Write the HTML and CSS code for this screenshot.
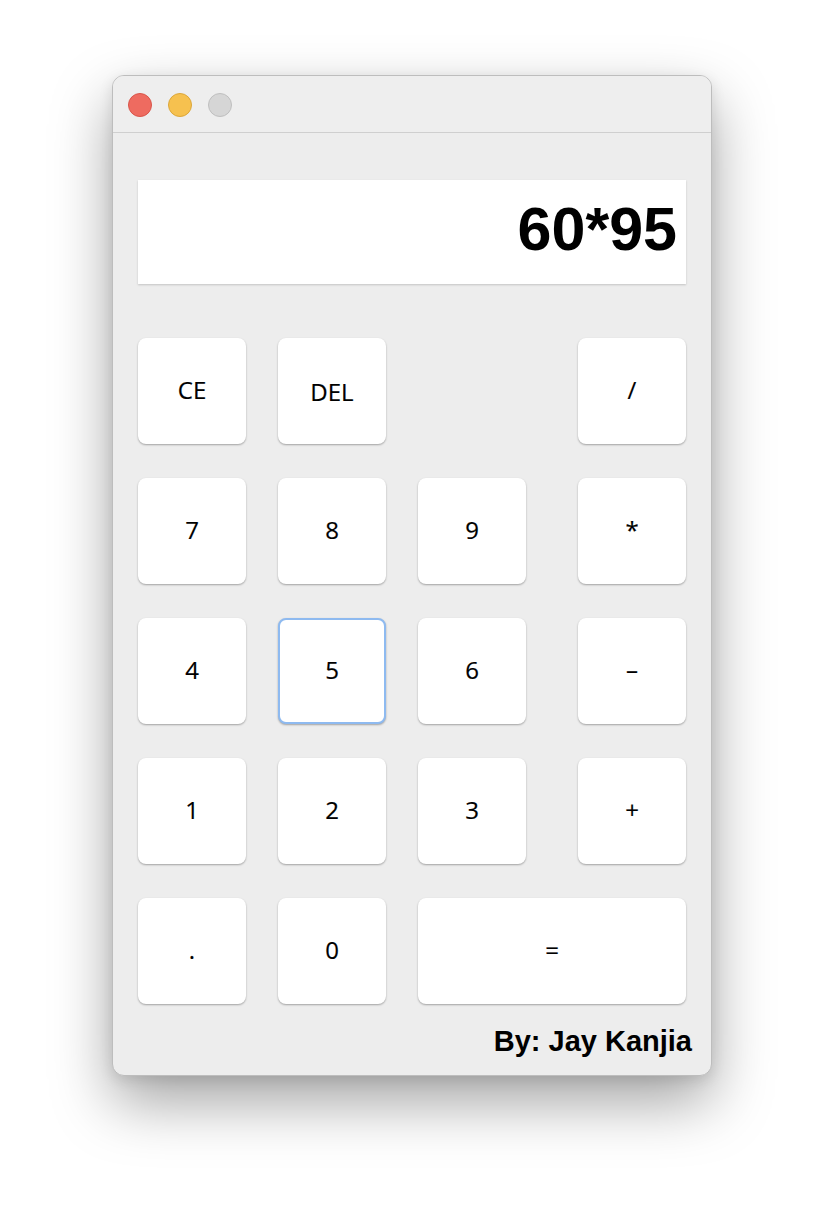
FILE: index.html
```html
<!DOCTYPE html>
<html>
<head>
<meta charset="utf-8">
<link rel="stylesheet" href="styles.css">
<title>Calculator</title>
</head>
<body>
<div class="window">
  <div class="titlebar">
    <span class="light red"></span>
    <span class="light yellow"></span>
    <span class="light gray"></span>
  </div>
  <div class="content">
    <div class="display">60*95</div>
    <div class="keys">
      <button class="key">CE</button>
      <button class="key key-del">DEL</button>
      <span class="spacer"></span>
      <button class="key op">/</button>

      <button class="key">7</button>
      <button class="key">8</button>
      <button class="key">9</button>
      <button class="key op">*</button>

      <button class="key">4</button>
      <button class="key focused">5</button>
      <button class="key">6</button>
      <button class="key op">–</button>

      <button class="key">1</button>
      <button class="key">2</button>
      <button class="key">3</button>
      <button class="key op">+</button>

      <button class="key">.</button>
      <button class="key">0</button>
      <button class="key equals">=</button>
    </div>
    <div class="credit">By: Jay Kanjia</div>
  </div>
</div>
</body>
</html>
```

FILE: styles.css
```css
html, body {
  margin: 0;
  padding: 0;
  background: #ffffff;
}

body {
  min-height: 1224px;
  box-sizing: border-box;
  padding-top: 75px;
  padding-left: 112px;
  font-family: "Liberation Sans", Arial, sans-serif;
}

.window {
  width: 600px;
  height: 1001px;
  box-sizing: border-box;
  border: 1px solid #bdbdbd;
  border-radius: 12px;
  background: #ededed;
  box-shadow: 0 26px 60px rgba(0, 0, 0, 0.36), 0 4px 14px rgba(0, 0, 0, 0.10);
  overflow: hidden;
  display: flex;
  flex-direction: column;
}

.titlebar {
  height: 57px;
  flex: none;
  box-sizing: border-box;
  border-bottom: 1px solid #cfcfcf;
  background: #eeeeee;
  display: flex;
  align-items: center;
  gap: 16px;
  padding-left: 15px;
  padding-top: 1px;
}

.light {
  width: 24px;
  height: 24px;
  box-sizing: border-box;
  border-radius: 50%;
  display: block;
}

.red {
  background: #ee6b60;
  border: 1px solid #d9554a;
}

.yellow {
  background: #f6c14f;
  border: 1px solid #dca73a;
}

.gray {
  background: #d6d6d6;
  border: 1px solid #bfbfbf;
}

.content {
  flex: 1;
  padding: 47px 19px 0 25px;
  display: flex;
  flex-direction: column;
}

.display {
  width: 548px;
  height: 104px;
  box-sizing: border-box;
  background: #ffffff;
  box-shadow: 0 1px 2px rgba(0, 0, 0, 0.18);
  display: flex;
  align-items: center;
  justify-content: flex-end;
  padding: 0 9px 6px 0;
  font-family: "Liberation Sans", Arial, sans-serif;
  font-weight: bold;
  font-size: 61px;
  color: #000000;
}

.keys {
  width: 548px;
  margin-top: 54px;
  display: grid;
  grid-template-columns: 108px 108px 108px 1fr;
  grid-auto-rows: 106px;
  column-gap: 32px;
  row-gap: 34px;
}

.key {
  width: 108px;
  height: 106px;
  margin: 0;
  padding: 0 0 4px 0;
  border: none;
  border-radius: 8px;
  background: #ffffff;
  box-shadow: 0 1px 2px rgba(0, 0, 0, 0.32);
  font-family: "Open Sans", "Noto Sans", sans-serif;
  font-size: 24px;
  color: #000000;
  display: flex;
  align-items: center;
  justify-content: center;
  -webkit-text-stroke: 0.2px #000000;
}

.key-del {
  padding: 0;
}

.op {
  justify-self: end;
}

.equals {
  grid-column: 3 / span 2;
  width: 268px;
}

.focused {
  border: 2px solid #8ebaf0;
}

.credit {
  align-self: flex-end;
  margin-top: 21px;
  font-family: "Liberation Sans", Arial, sans-serif;
  font-weight: bold;
  font-size: 29px;
  color: #000000;
}
```
